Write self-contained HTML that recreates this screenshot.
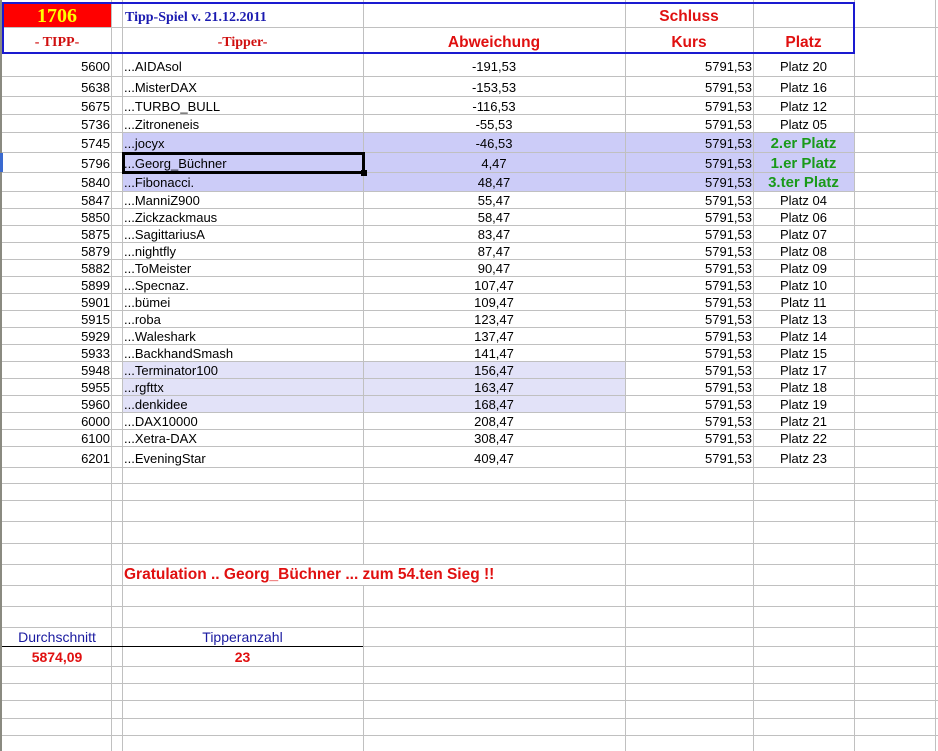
<!DOCTYPE html>
<html><head><meta charset="utf-8"><style>
*{margin:0;padding:0;box-sizing:border-box}
body{width:938px;height:751px;background:#fff;position:relative;overflow:hidden;font-family:"Liberation Sans",Arial,sans-serif;font-size:13px;color:#000}
.h{position:absolute;left:0;width:938px;height:1px;background:#c0c0c0}
.v{position:absolute;top:0;width:1px;height:751px;background:#c0c0c0}
.r{position:absolute;left:0;width:938px}
.c{position:absolute;top:0;height:100%;display:flex;align-items:center;white-space:nowrap}
.a{left:3px;width:107px;justify-content:flex-end}
.b{left:124px;width:238px}
.d{left:363px;width:262px;justify-content:center}
.e{left:625px;width:127px;justify-content:flex-end}
.f{left:753px;width:101px;justify-content:center}
.g{color:#1a9a1a;font-weight:bold;font-size:15px}
.bg1{position:absolute;top:0;height:100%;left:122px;width:732px;background:#ccccf8}
.bg2{position:absolute;top:0;height:100%;left:122px;width:503px;background:#e2e2f8}
.t{position:absolute;white-space:nowrap}
.red{color:#e01010;font-weight:bold}
</style></head><body>
<div class="h" style="top:27px"></div>
<div class="h" style="top:76px"></div><div class="h" style="top:96px"></div><div class="h" style="top:114px"></div><div class="h" style="top:132px"></div><div class="h" style="top:152px"></div><div class="h" style="top:172px"></div><div class="h" style="top:191px"></div>
<div class="h" style="top:208px"></div><div class="h" style="top:225px"></div><div class="h" style="top:242px"></div><div class="h" style="top:259px"></div><div class="h" style="top:276px"></div><div class="h" style="top:293px"></div><div class="h" style="top:310px"></div><div class="h" style="top:327px"></div><div class="h" style="top:344px"></div><div class="h" style="top:361px"></div><div class="h" style="top:378px"></div><div class="h" style="top:395px"></div><div class="h" style="top:412px"></div><div class="h" style="top:429px"></div><div class="h" style="top:446px"></div>
<div class="h" style="top:467px"></div><div class="h" style="top:483px"></div><div class="h" style="top:500px"></div><div class="h" style="top:521px"></div><div class="h" style="top:543px"></div><div class="h" style="top:564px"></div><div class="h" style="top:585px"></div><div class="h" style="top:606px"></div><div class="h" style="top:627px"></div><div class="h" style="top:646px"></div><div class="h" style="top:666px"></div><div class="h" style="top:683px"></div><div class="h" style="top:700px"></div><div class="h" style="top:718px"></div><div class="h" style="top:735px"></div>

<div class="r" style="top:133px;height:19px"><div class="bg1"></div></div>
<div class="r" style="top:153px;height:19px"><div class="bg1"></div></div>
<div class="r" style="top:173px;height:18px"><div class="bg1"></div></div>
<div class="r" style="top:362px;height:16px"><div class="bg2"></div></div>
<div class="r" style="top:379px;height:16px"><div class="bg2"></div></div>
<div class="r" style="top:396px;height:16px"><div class="bg2"></div></div>

<div class="v" style="left:0;width:2px;background:#8a8a80"></div>
<div class="v" style="left:111px"></div><div class="v" style="left:122px"></div><div class="v" style="left:363px"></div><div class="v" style="left:625px"></div><div class="v" style="left:753px"></div><div class="v" style="left:854px"></div><div class="v" style="left:935px"></div>
<div style="position:absolute;left:0;top:153px;width:3px;height:19px;background:#3a6ad0"></div>

<div style="position:absolute;left:3px;top:3px;width:108px;height:24px;background:#ff0000"></div>
<div style="position:absolute;left:2px;top:2px;width:853px;height:52px;border:2px solid #1a1ad0"></div>
<div class="t" style="left:3px;width:108px;top:4px;height:24px;text-align:center;line-height:24px;font-family:'Liberation Serif',serif;font-weight:bold;font-size:20px;color:#ffff00">1706</div>
<div class="t" style="left:125px;top:10px;font-family:'Liberation Serif',serif;font-weight:bold;font-size:14px;color:#1a1ab0">Tipp-Spiel v. 21.12.2011</div>
<div class="t" style="left:3px;width:108px;top:35px;text-align:center;font-family:'Liberation Serif',serif;font-weight:bold;font-size:14px;color:#d01010">- TIPP-</div>
<div class="t" style="left:122px;width:241px;top:35px;text-align:center;font-family:'Liberation Serif',serif;font-weight:bold;font-size:14px;color:#d01010">-Tipper-</div>
<div class="t red" style="left:363px;width:262px;top:34px;text-align:center;font-size:15.5px">Abweichung</div>
<div class="t red" style="left:625px;width:128px;top:8px;text-align:center;font-size:15.5px">Schluss</div>
<div class="t red" style="left:625px;width:128px;top:34px;text-align:center;font-size:15.5px">Kurs</div>
<div class="t red" style="left:753px;width:101px;top:34px;text-align:center;font-size:15.5px">Platz</div>

<div class="r" style="top:56px;height:21px"><div class="c a">5600</div><div class="c b">...AIDAsol</div><div class="c d">-191,53</div><div class="c e">5791,53</div><div class="c f">Platz 20</div></div>
<div class="r" style="top:77px;height:20px"><div class="c a">5638</div><div class="c b">...MisterDAX</div><div class="c d">-153,53</div><div class="c e">5791,53</div><div class="c f">Platz 16</div></div>
<div class="r" style="top:97px;height:18px"><div class="c a">5675</div><div class="c b">...TURBO_BULL</div><div class="c d">-116,53</div><div class="c e">5791,53</div><div class="c f">Platz 12</div></div>
<div class="r" style="top:115px;height:18px"><div class="c a">5736</div><div class="c b">...Zitroneneis</div><div class="c d">-55,53</div><div class="c e">5791,53</div><div class="c f">Platz 05</div></div>
<div class="r" style="top:133px;height:20px"><div class="c a">5745</div><div class="c b">...jocyx</div><div class="c d">-46,53</div><div class="c e">5791,53</div><div class="c f g">2.er Platz</div></div>
<div class="r" style="top:153px;height:20px"><div class="c a">5796</div><div class="c b">...Georg_Büchner</div><div class="c d">4,47</div><div class="c e">5791,53</div><div class="c f g">1.er Platz</div></div>
<div class="r" style="top:173px;height:19px"><div class="c a">5840</div><div class="c b">...Fibonacci.</div><div class="c d">48,47</div><div class="c e">5791,53</div><div class="c f g">3.ter Platz</div></div>
<div class="r" style="top:192px;height:17px"><div class="c a">5847</div><div class="c b">...ManniZ900</div><div class="c d">55,47</div><div class="c e">5791,53</div><div class="c f">Platz 04</div></div>
<div class="r" style="top:209px;height:17px"><div class="c a">5850</div><div class="c b">...Zickzackmaus</div><div class="c d">58,47</div><div class="c e">5791,53</div><div class="c f">Platz 06</div></div>
<div class="r" style="top:226px;height:17px"><div class="c a">5875</div><div class="c b">...SagittariusA</div><div class="c d">83,47</div><div class="c e">5791,53</div><div class="c f">Platz 07</div></div>
<div class="r" style="top:243px;height:17px"><div class="c a">5879</div><div class="c b">...nightfly</div><div class="c d">87,47</div><div class="c e">5791,53</div><div class="c f">Platz 08</div></div>
<div class="r" style="top:260px;height:17px"><div class="c a">5882</div><div class="c b">...ToMeister</div><div class="c d">90,47</div><div class="c e">5791,53</div><div class="c f">Platz 09</div></div>
<div class="r" style="top:277px;height:17px"><div class="c a">5899</div><div class="c b">...Specnaz.</div><div class="c d">107,47</div><div class="c e">5791,53</div><div class="c f">Platz 10</div></div>
<div class="r" style="top:294px;height:17px"><div class="c a">5901</div><div class="c b">...bümei</div><div class="c d">109,47</div><div class="c e">5791,53</div><div class="c f">Platz 11</div></div>
<div class="r" style="top:311px;height:17px"><div class="c a">5915</div><div class="c b">...roba</div><div class="c d">123,47</div><div class="c e">5791,53</div><div class="c f">Platz 13</div></div>
<div class="r" style="top:328px;height:17px"><div class="c a">5929</div><div class="c b">...Waleshark</div><div class="c d">137,47</div><div class="c e">5791,53</div><div class="c f">Platz 14</div></div>
<div class="r" style="top:345px;height:17px"><div class="c a">5933</div><div class="c b">...BackhandSmash</div><div class="c d">141,47</div><div class="c e">5791,53</div><div class="c f">Platz 15</div></div>
<div class="r" style="top:362px;height:17px"><div class="c a">5948</div><div class="c b">...Terminator100</div><div class="c d">156,47</div><div class="c e">5791,53</div><div class="c f">Platz 17</div></div>
<div class="r" style="top:379px;height:17px"><div class="c a">5955</div><div class="c b">...rgfttx</div><div class="c d">163,47</div><div class="c e">5791,53</div><div class="c f">Platz 18</div></div>
<div class="r" style="top:396px;height:17px"><div class="c a">5960</div><div class="c b">...denkidee</div><div class="c d">168,47</div><div class="c e">5791,53</div><div class="c f">Platz 19</div></div>
<div class="r" style="top:413px;height:17px"><div class="c a">6000</div><div class="c b">...DAX10000</div><div class="c d">208,47</div><div class="c e">5791,53</div><div class="c f">Platz 21</div></div>
<div class="r" style="top:430px;height:17px"><div class="c a">6100</div><div class="c b">...Xetra-DAX</div><div class="c d">308,47</div><div class="c e">5791,53</div><div class="c f">Platz 22</div></div>
<div class="r" style="top:448px;height:20px"><div class="c a">6201</div><div class="c b">...EveningStar</div><div class="c d">409,47</div><div class="c e">5791,53</div><div class="c f">Platz 23</div></div>

<div style="position:absolute;left:122px;top:152px;width:243px;height:22px;border:3px solid #000"></div>
<div style="position:absolute;left:361px;top:170px;width:6px;height:6px;background:#000"></div>

<div style="position:absolute;left:123px;top:565px;width:502px;height:20px;background:#fff"></div>
<div class="t red" style="left:124px;top:566px;font-size:15.5px">Gratulation .. Georg_Büchner ...  zum 54.ten Sieg !!</div>
<div class="t" style="left:3px;width:108px;top:629px;text-align:center;font-size:14px;color:#1a1aa0">Durchschnitt</div>
<div class="t" style="left:122px;width:241px;top:629px;text-align:center;font-size:14px;color:#1a1aa0">Tipperanzahl</div>
<div style="position:absolute;left:2px;top:646px;width:361px;height:1px;background:#000"></div>
<div class="t red" style="left:3px;width:108px;top:649px;text-align:center;font-size:14px">5874,09</div>
<div class="t red" style="left:122px;width:241px;top:649px;text-align:center;font-size:14px">23</div>
</body></html>
